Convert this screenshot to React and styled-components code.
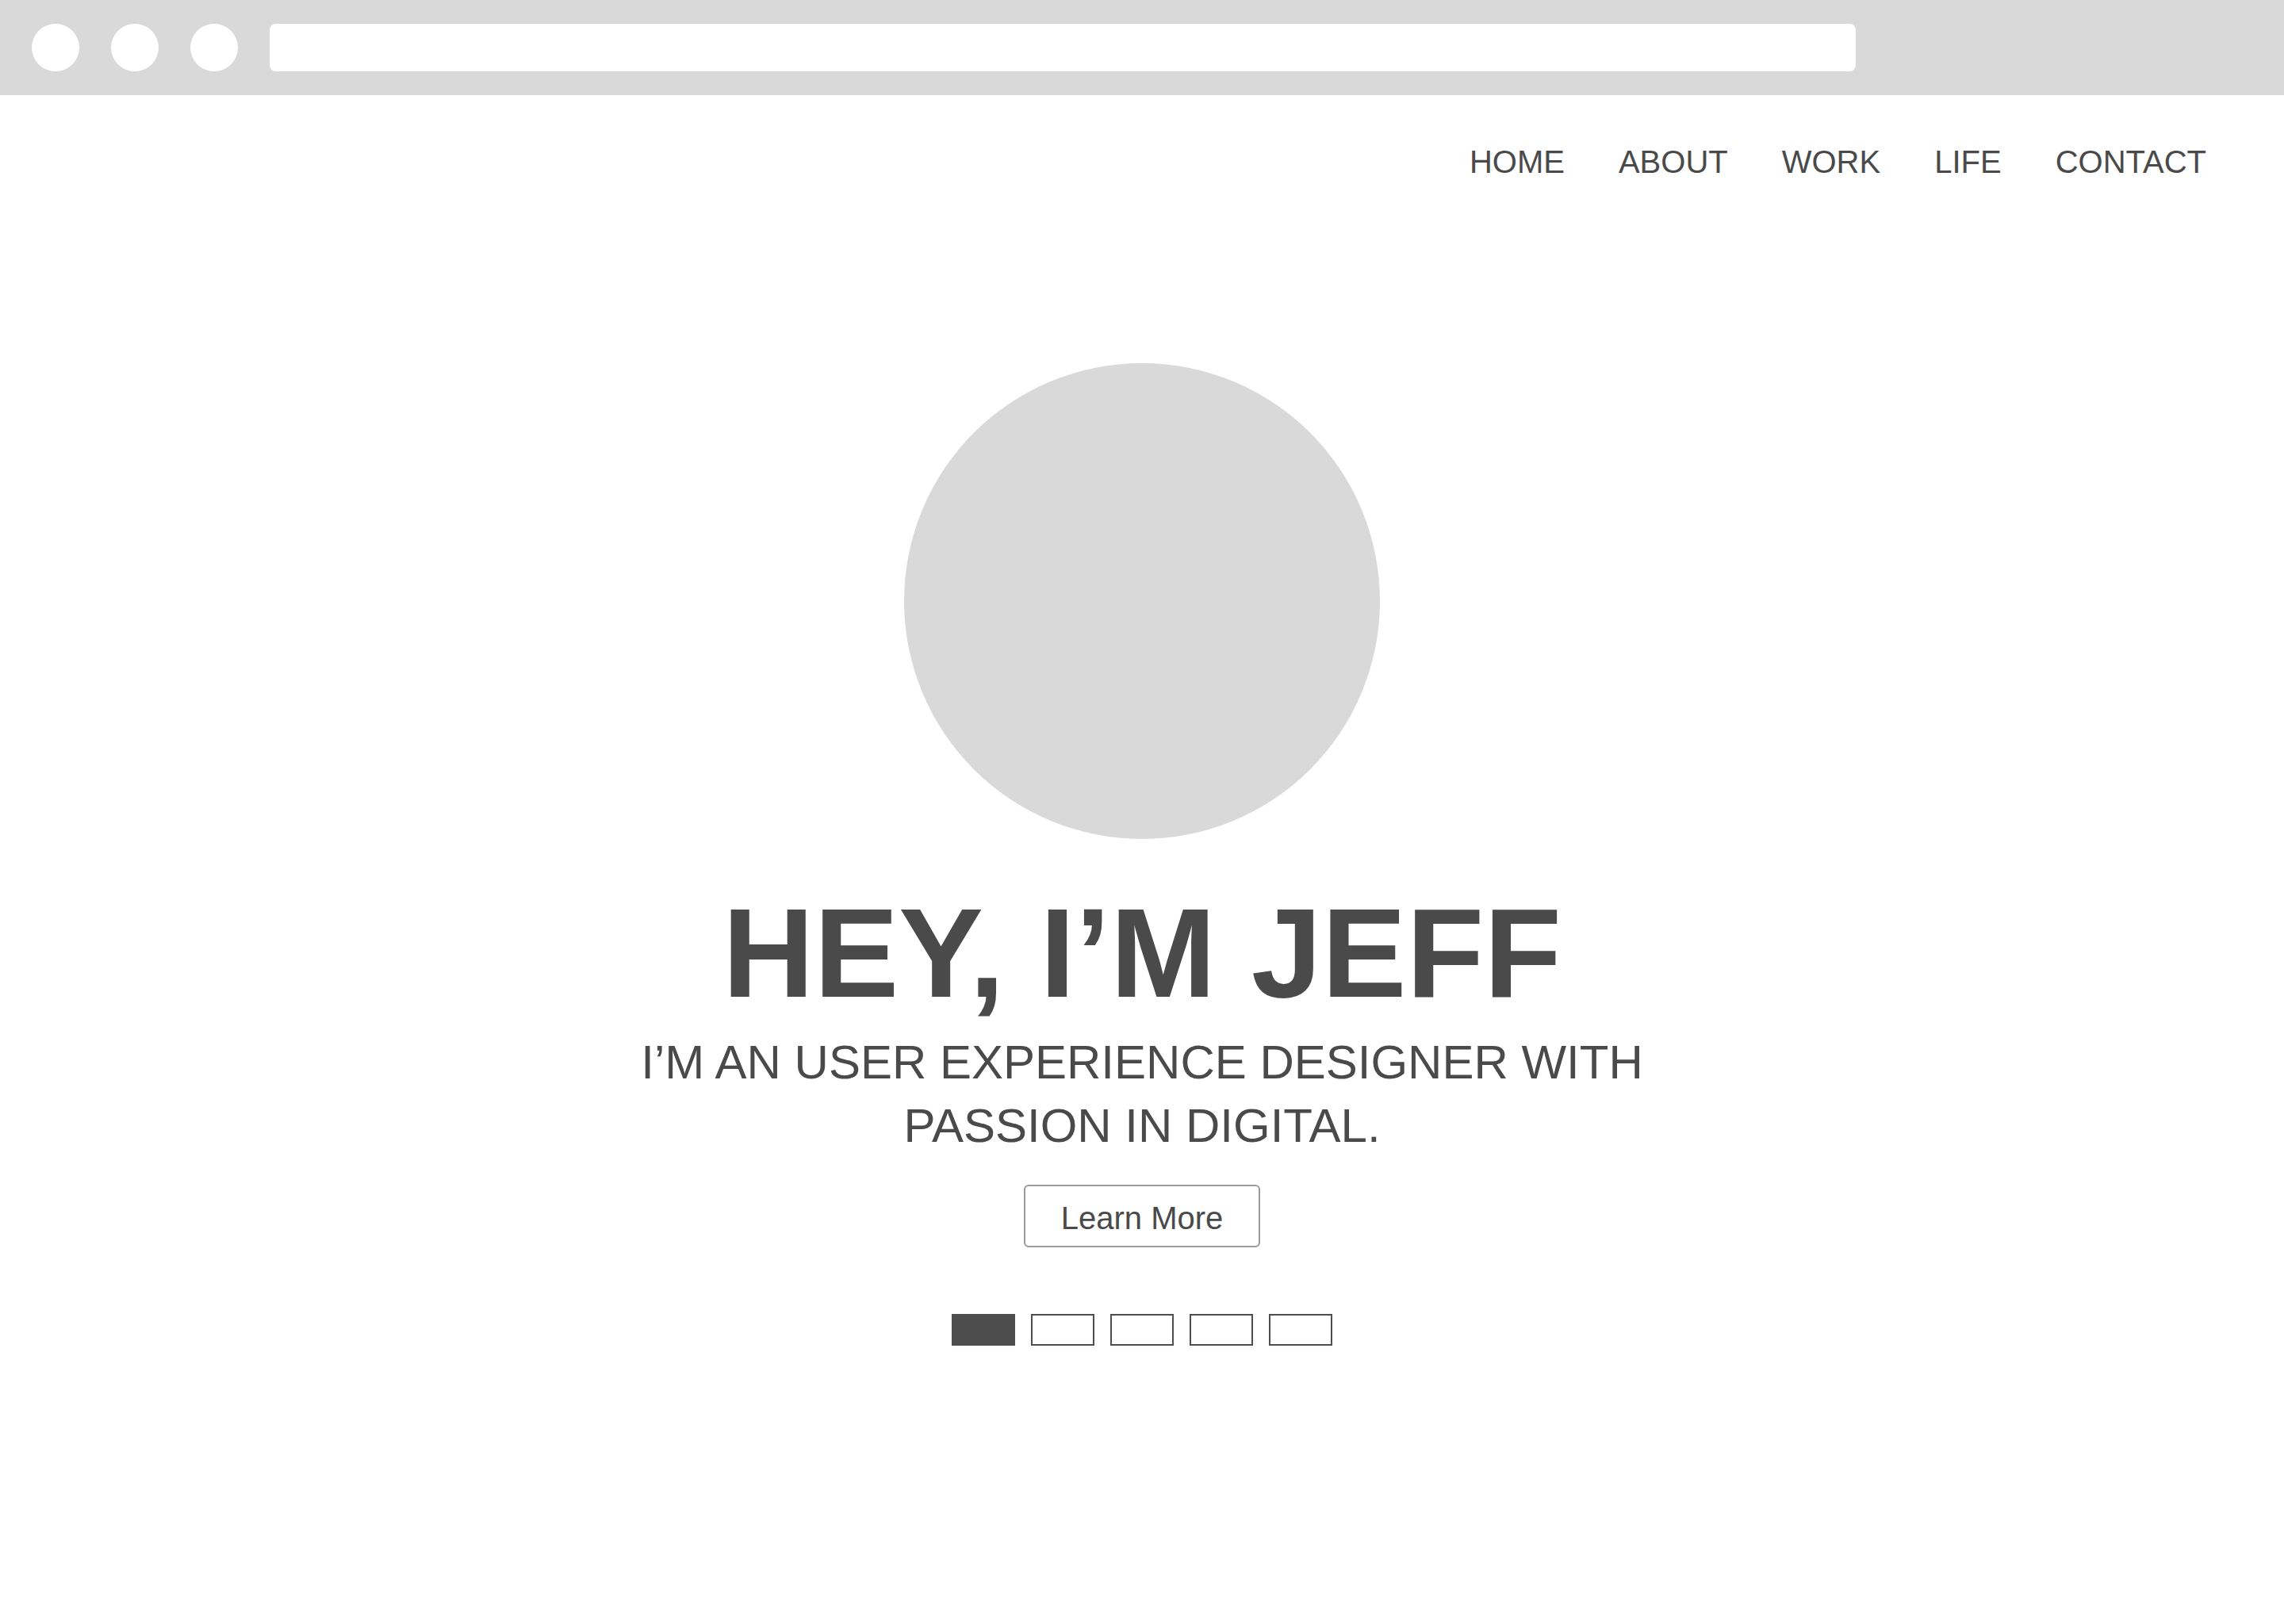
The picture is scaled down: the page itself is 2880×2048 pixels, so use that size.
import styled, { createGlobalStyle } from 'styled-components';

const GlobalStyle = createGlobalStyle`
  html, body {
    margin: 0;
    padding: 0;
    background: #ffffff;
  }
  body {
    font-family: "Liberation Sans", Arial, sans-serif;
    color: #4a4a4a;
  }
`;

const Page = styled.div`
  min-height: 2048px;
  background: #ffffff;
`;

const BrowserBar = styled.div`
  height: 120px;
  background: #d9d9d9;
  display: flex;
  align-items: center;
  padding-left: 40px;
  box-sizing: border-box;
`;

const WindowDots = styled.div`
  display: flex;
  gap: 40px;
`;

const WindowDot = styled.span`
  width: 60px;
  height: 60px;
  border-radius: 50%;
  background: #ffffff;
`;

const AddressBar = styled.div`
  width: 2000px;
  height: 60px;
  margin-left: 40px;
  border-radius: 8px;
  background: #ffffff;
`;

const Nav = styled.nav`
  display: flex;
  justify-content: flex-end;
  gap: 68px;
  padding: 64px 98px 0 0;
`;

const NavLink = styled.a`
  font-size: 40px;
  line-height: 40px;
  color: #4a4a4a;
  text-decoration: none;
  text-transform: uppercase;
`;

const Hero = styled.section`
  display: flex;
  flex-direction: column;
  align-items: center;
  padding-top: 234px;
`;

const Avatar = styled.div`
  width: 600px;
  height: 600px;
  border-radius: 50%;
  background: #d9d9d9;
`;

const Title = styled.h1`
  margin: 64px 0 0;
  font-size: 160px;
  line-height: 160px;
  font-weight: 700;
  color: #4a4a4a;
`;

const Subtitle = styled.p`
  margin: 18px 0 0;
  max-width: 1300px;
  font-size: 60px;
  line-height: 80px;
  text-align: center;
  color: #4a4a4a;
`;

const Button = styled.button`
  margin-top: 34px;
  width: 298px;
  height: 79px;
  box-sizing: border-box;
  padding: 19px 0 14px;
  border: 2px solid #9a9a9a;
  border-radius: 6px;
  background: #ffffff;
  font-family: "Liberation Sans", Arial, sans-serif;
  font-size: 40px;
  line-height: 40px;
  color: #4a4a4a;
`;

const Pager = styled.div`
  display: flex;
  gap: 20px;
  margin-top: 84px;
`;

const PagerItem = styled.span`
  width: 80px;
  height: 40px;
  box-sizing: border-box;
  border: 2px solid #4d4d4d;
  background: ${p => (p.$active ? '#4d4d4d' : '#ffffff')};
`;

const links = ['Home', 'About', 'Work', 'Life', 'Contact'];

export default function App() {
  return (
    <Page>
      <GlobalStyle />
      <BrowserBar>
        <WindowDots>
          <WindowDot />
          <WindowDot />
          <WindowDot />
        </WindowDots>
        <AddressBar />
      </BrowserBar>
      <Nav>
        {links.map(link => (
          <NavLink key={link} href="#">{link}</NavLink>
        ))}
      </Nav>
      <Hero>
        <Avatar />
        <Title>HEY, I’M JEFF</Title>
        <Subtitle>I’M AN USER EXPERIENCE DESIGNER WITH PASSION IN DIGITAL.</Subtitle>
        <Button>Learn More</Button>
        <Pager>
          {[0, 1, 2, 3, 4].map(i => (
            <PagerItem key={i} $active={i === 0} />
          ))}
        </Pager>
      </Hero>
    </Page>
  );
}
